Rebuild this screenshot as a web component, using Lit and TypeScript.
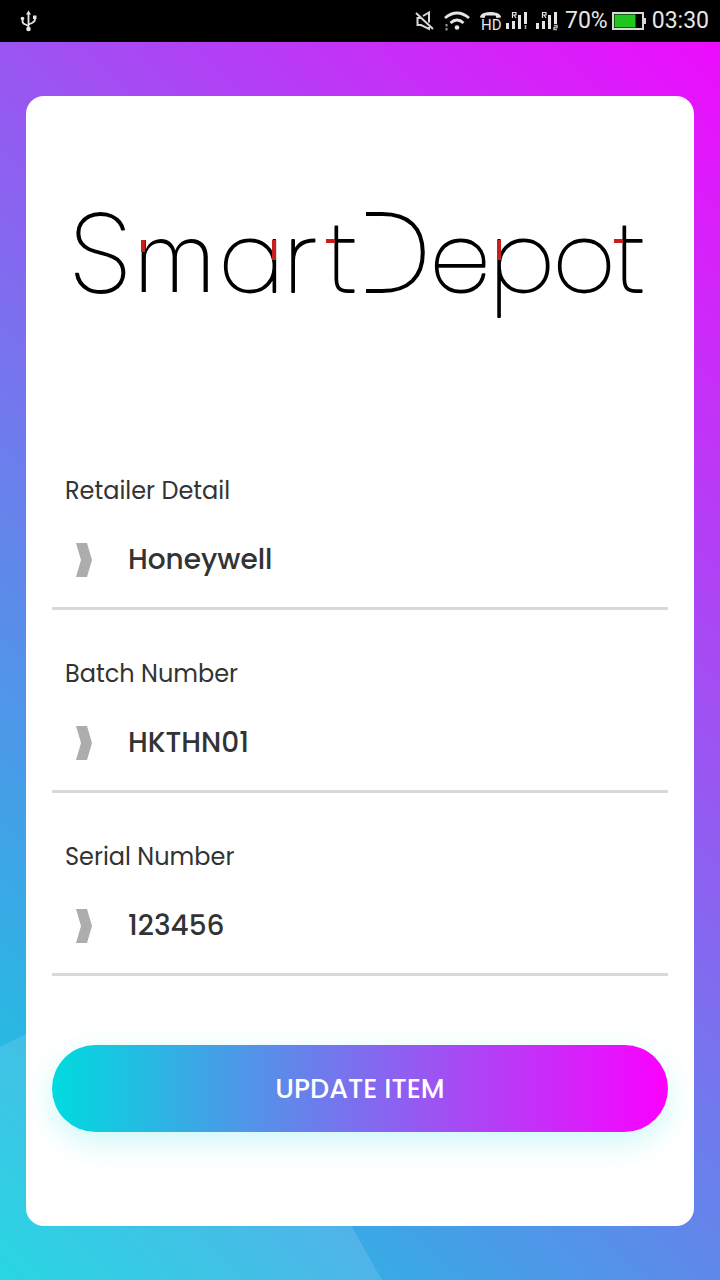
import { LitElement, html, css, svg } from "lit";
import { customElement, state } from "lit/decorators.js";

interface Field {
  id: string;
  label: string;
  value: string;
}

@customElement("status-bar")
class StatusBar extends LitElement {
  static styles = css`
    :host {
      display: flex;
      align-items: center;
      justify-content: space-between;
      box-sizing: border-box;
      height: 42px;
      padding: 0 11px 0 20px;
      background: #000;
      color: #e6e6e6;
      font: 400 23px/42px Roboto, "Liberation Sans", sans-serif;
    }
    .group {
      display: flex;
      align-items: center;
    }
    .signals {
      margin-right: 6px;
    }
    .battery {
      margin: 0 6px 0 4px;
    }
    svg {
      display: block;
    }
  `;

  private bars(tag: string) {
    return svg`
      <path d="M1.500 23v-6M7.500 23v-8M13.500 23V9" stroke="#e6e6e6" stroke-width="3" />
      <path d="M19.500 6v12" stroke="#e6e6e6" stroke-width="3" />
      <path d="M6.500 12V6.500H10v2.500H7m1 0l2 3" fill="none" stroke="#e6e6e6" stroke-width="1.200" />
      <path d=${tag === "1" ? "M19.5 19v4" : "M18 19.500h3v2h-3v2h3"} fill="none" stroke="#b0b0b0" stroke-width="1.500" />
    `;
  }

  render() {
    return html`
      <svg width="18" height="24" viewBox="20 9 18 24" aria-hidden="true">
        <path d="M28.500 14v14M22.500 19v2c0 2 1 3 3 3.500l3 1.500M35 17v2c0 2-1 3-3 4l-3.500 1.500" fill="none" stroke="#e6e6e6" stroke-width="1.800" />
        <path d="M26 14.500l2.500-4 2.500 4zM33 15.500h3.500v3.500H33z" fill="#e6e6e6" />
        <circle cx="22.500" cy="18.500" r="1.800" fill="#e6e6e6" />
        <circle cx="28.500" cy="29" r="2.300" fill="#e6e6e6" />
      </svg>
      <div class="group">
        <svg class="signals" width="144" height="42" viewBox="416 0 144 42" aria-hidden="true">
          <g fill="none" stroke="#d8d8d8" stroke-width="2">
            <path d="M417 13l17 16M424 16l6-3.500v10M430 27v2l-8-4H418.500v-7h3" />
          </g>
          <g fill="none" stroke="#e6e6e6" stroke-width="2.800">
            <path d="M446 18q12-10 24 0M451.500 23q6.500-6 13 0" />
          </g>
          <circle cx="458" cy="27.500" r="2.300" fill="#e6e6e6" />
          <path d="M447.500 24v2.500M447.500 28v2.500" stroke="#999" stroke-width="2" />
          <path d="M481 17.500q0-3 4-4.500 6.500-2 13 0 4 1.500 4 4.500l-4.500.5-1-2.500h-10l-1 2.500z" fill="#e6e6e6" />
          <text x="482" y="30" fill="#e6e6e6" font-size="15">HD</text>
          <g transform="translate(507 6)">${this.bars("1")}</g>
          <g transform="translate(537 6)">${this.bars("2")}</g>
        </svg>
        <span>70%</span>
        <svg class="battery" width="34" height="18" viewBox="0 0 34 18" aria-hidden="true">
          <path d="M1 1h30v16H1z" fill="#000" stroke="#d8d8d8" stroke-width="2" />
          <path d="M32 6h2v6h-2z" fill="#d8d8d8" />
          <path d="M2.500 2.500h21v13h-21z" fill="#1fc71f" />
        </svg>
        <time>03:30</time>
      </div>
    `;
  }
}

@customElement("brand-logo")
class BrandLogo extends LitElement {
  static styles = css`
    :host {
      display: block;
    }
    svg {
      display: block;
      width: 100%;
    }
    .word {
      font-family: Poppins, Inter, sans-serif;
      font-weight: 200;
      font-size: 96px;
      fill: #000;
      stroke: #000;
      stroke-width: 1.8;
      stroke-linejoin: round;
    }
    .capital {
      font-size: 112px;
    }
    .narrow {
      font-family: Inter, sans-serif;
      stroke: none;
    }
    .accent {
      stroke: #c8201e;
      stroke-width: 4;
    }
  `;

  render() {
    return html`
      <svg viewBox="52 136 616 210" role="img" aria-label="SmartDepot">
        <text class="word" y="292"><tspan class="capital" x="70">S</tspan><tspan class="narrow" x="133">m</tspan><tspan x="219 284 325">art</tspan><tspan class="capital" x="352">D</tspan><tspan x="430 490 553 613">epot</tspan></text>
        <path d="M357 208h9v88h-9z" fill="#fff" />
        <path class="accent" d="M143 240v12M274 240v20M326 241h9M499 240v20M614 241h9" />
      </svg>
    `;
  }
}

@customElement("app-root")
class AppRoot extends LitElement {
  static styles = css`
    :host {
      display: flex;
      flex-direction: column;
      min-height: 100vh;
      font-family: Poppins, Inter, "Noto Sans", sans-serif;
      color: #333;
    }
    .page {
      position: relative;
      flex: 1;
      box-sizing: border-box;
      padding: 54px 26px;
      overflow: hidden;
      background: linear-gradient(45deg, #00dbde -5%, #fc00ff 106%);
    }
    .facet {
      position: absolute;
      left: 0;
      bottom: 0;
      width: 382px;
      height: 330px;
      background: rgba(255, 255, 255, 0.12);
      clip-path: polygon(0 97px, 195px 0, 100% 100%, 0 100%);
    }
    .card {
      position: relative;
      box-sizing: border-box;
      padding: 40px 26px 94px;
      border-radius: 18px;
      background: #fff;
    }
    form {
      display: flex;
      flex-direction: column;
      gap: 44px;
      margin-top: 125px;
    }
    .field {
      border-bottom: 3px solid #d9d9d9;
    }
    label {
      display: block;
      padding-left: 13px;
      font-size: 24px;
      line-height: 40px;
    }
    .control {
      display: flex;
      align-items: center;
      gap: 36px;
      box-sizing: border-box;
      height: 96px;
      padding: 2px 0 0 24px;
    }
    .control svg {
      flex: none;
    }
    input {
      flex: 1;
      min-width: 0;
      padding: 0;
      border: 0;
      outline: 0;
      background: none;
      color: #333;
      font: inherit;
      font-size: 28px;
      font-weight: 500;
      line-height: 40px;
    }
    button {
      height: 87px;
      margin-top: 25px;
      border: 0;
      border-radius: 44px;
      background: linear-gradient(90deg, #00dbde, #fc00ff);
      box-shadow: 0 10px 30px rgba(3, 216, 222, 0.2);
      color: #fff;
      font: inherit;
      font-size: 27px;
      font-weight: 500;
      cursor: pointer;
    }
  `;

  @state() private fields: Field[] = [
    { id: "retailer", label: "Retailer Detail", value: "Honeywell" },
    { id: "batch", label: "Batch Number", value: "HKTHN01" },
    { id: "serial", label: "Serial Number", value: "123456" },
  ];

  render() {
    return html`
      <status-bar></status-bar>
      <main class="page">
        <div class="facet"></div>
        <section class="card">
          <brand-logo></brand-logo>
          <form @submit=${(e: Event) => e.preventDefault()}>
            ${this.fields.map(
              (f) => html`
                <div class="field">
                  <label for=${f.id}>${f.label}</label>
                  <div class="control">
                    <svg width="16" height="34" viewBox="0 0 16 34" aria-hidden="true">
                      <path d="M0 0h11l5 17-5 17H0l5-17z" fill="#adadad" />
                    </svg>
                    <input id=${f.id} type="text" .value=${f.value} />
                  </div>
                </div>
              `
            )}
            <button type="submit">UPDATE ITEM</button>
          </form>
        </section>
      </main>
    `;
  }
}
